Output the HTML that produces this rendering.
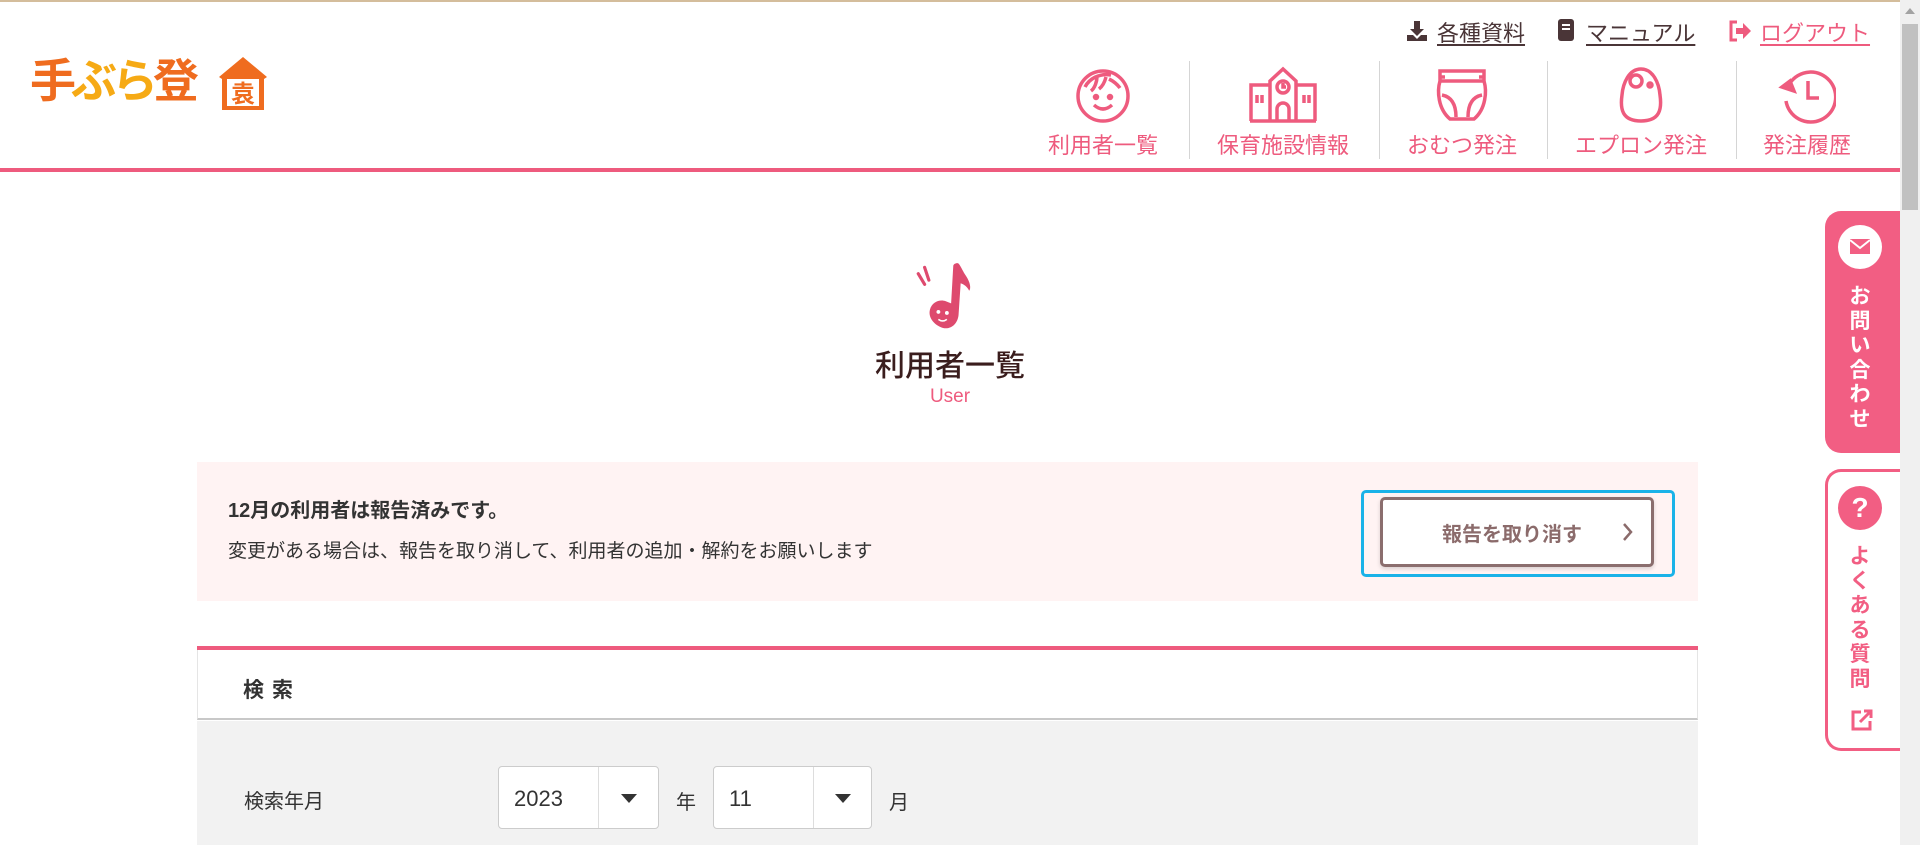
<!DOCTYPE html>
<html><head><meta charset="utf-8">
<style>
*{margin:0;padding:0;box-sizing:border-box}
body{width:1920px;height:845px;overflow:hidden;background:#fff;font-family:"Liberation Sans","Noto Sans CJK JP",sans-serif;position:relative;color:#333}
.a{position:absolute}
.tl{font-size:22px;text-decoration:underline;color:#4a3537;text-underline-offset:3px;white-space:nowrap}
.nav{position:absolute;top:66px;width:180px;text-align:center;color:#ee5b7e;font-size:22px;white-space:nowrap}
.nav svg{display:block;margin:0 auto 4px}
.div{position:absolute;top:61px;width:1px;height:98px;background:#d5d5d5}
.vt{font-weight:bold;font-size:21px;line-height:24.5px;text-align:center;width:26px}
.sel{position:absolute;top:766px;height:63px;background:#fff;border:1px solid #ccc;border-radius:4px}
.sel span{position:absolute;left:15px;top:19px;font-size:22px;color:#333}
.sel i{position:absolute;top:0;bottom:0;width:1px;background:#ddd}
</style></head><body>
<div class="a" style="left:0;top:0;width:1900px;height:2px;background:#d4bd9c"></div>

<!-- logo -->
<div class="a" style="left:30px;top:50px;height:62px;font-weight:bold;font-size:46px;line-height:62px;white-space:nowrap;letter-spacing:-5px">
<span style="color:#ef6c1f">手</span><span style="color:#f6aa15">ぶら</span><span style="color:#ef6c1f">登</span></div>
<svg class="a" style="left:216px;top:55px" width="54" height="56" viewBox="0 0 54 56"><path d="M3 22 L27 2 L51 22 L48 24 L48 55 L6 55 L6 24 Z" fill="#ef6c1f"/><rect x="11" y="24" width="32" height="27" fill="#fff"/><text x="27" y="47" font-size="24" font-weight="bold" fill="#ef6c1f" text-anchor="middle" font-family="Noto Sans CJK JP">袁</text></svg>

<!-- top links -->
<svg class="a" style="left:1406px;top:20px" width="22" height="22" viewBox="0 0 22 22"><path d="M8 1h6v8h4l-7 7-7-7h4z M1 15h6l4 4 4-4h6v6H1z" fill="#4a3537"/></svg>
<div class="a tl" style="left:1437px;top:16px">各種資料</div>
<svg class="a" style="left:1557px;top:18px" width="18" height="24" viewBox="0 0 18 24"><rect x="1" y="1" width="16" height="22" rx="3" fill="#4a3537"/><rect x="5" y="6" width="8" height="2" fill="#fff"/><rect x="5" y="10" width="8" height="2" fill="#fff"/></svg>
<div class="a tl" style="left:1586px;top:16px">マニュアル</div>
<svg class="a" style="left:1728px;top:20px" width="24" height="22" viewBox="0 0 24 22"><path d="M9 2H3v18h6" fill="none" stroke="#ee5b7e" stroke-width="3"/><path d="M8 8h7V3l8 8-8 8v-5H8z" fill="#ee5b7e"/></svg>
<div class="a tl" style="left:1760px;top:16px;color:#ee5b7e">ログアウト</div>

<!-- nav -->
<div class="nav" style="left:1013px"><svg width="56" height="58" viewBox="0 0 56 58" fill="none" stroke="#ee5b7e" stroke-width="3.5"><circle cx="28" cy="30" r="25"/><path d="M10 21c4-8 14-14 26-12M16 25c4-3 6-10 6-14M24 23c4-3 6-8 7-12M34 13c4 2 8 5 11 9"/><circle cx="21" cy="31" r="1.5" fill="#ee5b7e"/><circle cx="35" cy="31" r="1.5" fill="#ee5b7e"/><path d="M19 39q9 8 18 0"/></svg>利用者一覧</div>
<div class="div" style="left:1189px"></div>
<div class="nav" style="left:1193px"><svg width="70" height="58" viewBox="0 0 70 58" fill="none" stroke="#ee5b7e" stroke-width="3.5"><path d="M3 55V19h19M67 55V19H48M22 55V15L35 3l13 12v40M2 55h66"/><circle cx="35" cy="21" r="6"/><path d="M35 17v4h3M29 55V43a6 6 0 0112 0v12M9 29v8M14 29v8M56 29v8M61 29v8"/></svg>保育施設情報</div>
<div class="div" style="left:1379px"></div>
<div class="nav" style="left:1372px"><svg width="56" height="58" viewBox="0 0 56 58" fill="none" stroke="#ee5b7e" stroke-width="3.5"><path d="M6 5h44v10c3 10 2 28-10 38H16C4 43 3 25 6 15z M6 15h44 M5 11h6M45 11h6"/><path d="M8 29c10 2 14 10 14 22M48 29c-10 2-14 10-14 22"/></svg>おむつ発注</div>
<div class="div" style="left:1547px"></div>
<div class="nav" style="left:1551px"><svg width="50" height="58" viewBox="0 0 50 58" fill="none" stroke="#ee5b7e" stroke-width="3.5"><path d="M25 3c-12 0-18 14-19 26-2 14 0 26 19 26s21-12 19-26C43 17 37 3 25 3z"/><circle cx="20" cy="15" r="6"/><circle cx="34" cy="19" r="2"/></svg>エプロン発注</div>
<div class="div" style="left:1736px"></div>
<div class="nav" style="left:1717px"><svg width="58" height="58" viewBox="0 0 58 58" fill="none" stroke="#ee5b7e" stroke-width="3.5"><path d="M12 17A25 25 0 1 1 8 35"/><path d="M4 21l8-6 4 10z" fill="#ee5b7e"/><path d="M30 15v17h11"/></svg>発注履歴</div>
<div class="a" style="left:0;top:168px;width:1900px;height:4px;background:#ee5b7e"></div>

<!-- scrollbar -->
<div class="a" style="left:1900px;top:0;width:20px;height:845px;background:#f0f0f0"></div>
<div class="a" style="left:1905px;top:8px;width:0;height:0;border-left:5px solid transparent;border-right:5px solid transparent;border-bottom:6px solid #a3a3a3"></div>
<div class="a" style="left:1902px;top:24px;width:16px;height:186px;background:#c1c1c1"></div>

<!-- side tabs -->
<div class="a" style="left:1825px;top:211px;width:75px;height:242px;background:#f25e83;border-radius:16px 0 0 16px"></div>
<div class="a" style="left:1838px;top:225px;width:44px;height:44px;border-radius:50%;background:#fff"></div>
<svg class="a" style="left:1849px;top:238px" width="22" height="17" viewBox="0 0 22 17"><rect x="1" y="1" width="20" height="15" fill="#f25e83"/><path d="M1 2l10 8 10-8" stroke="#fff" stroke-width="2" fill="none"/></svg>
<div class="a vt" style="left:1847px;top:285px;color:#fff">お<br>問<br>い<br>合<br>わ<br>せ</div>
<div class="a" style="left:1825px;top:469px;width:75px;height:282px;background:#fff;border:3px solid #f25e83;border-right:none;border-radius:16px 0 0 16px"></div>
<div class="a" style="left:1838px;top:486px;width:44px;height:44px;border-radius:50%;background:#f25e83;color:#fff;font-weight:bold;font-size:28px;line-height:44px;text-align:center">?</div>
<div class="a vt" style="left:1847px;top:545px;color:#f25e83">よ<br>く<br>あ<br>る<br>質<br>問</div>
<svg class="a" style="left:1850px;top:708px" width="24" height="24" viewBox="0 0 24 24" fill="none" stroke="#f25e83" stroke-width="3"><path d="M11 4H3v17h17v-8"/><path d="M10 14L21 3M14 3h7v7"/></svg>

<!-- title -->
<svg class="a" style="left:914px;top:261px" width="70" height="70" viewBox="0 0 64 66"><path d="M40 2c2 0 4 6 8 12s5 12 3 14c-2-4-5-6-8-7l-2 30c-1 9-8 14-15 12S12 54 14 46s10-10 15-8l5 2 2-35c0-2 2-3 4-3z" fill="#de4a6e"/><path d="M3 12l6 10M9 6l4 12" stroke="#de4a6e" stroke-width="3" stroke-linecap="round"/><circle cx="22" cy="48" r="1.8" fill="#fff"/><circle cx="30" cy="49" r="1.8" fill="#fff"/><path d="M22 55q4 3 8 0" stroke="#fff" stroke-width="1.5" fill="none"/></svg>
<div class="a" style="left:760px;top:341px;width:380px;text-align:center;font-size:30px;color:#3a1d1d;font-weight:500">利用者一覧</div>
<div class="a" style="left:760px;top:386px;width:380px;text-align:center;font-size:19px;color:#ee5b7e">User</div>

<!-- banner -->
<div class="a" style="left:197px;top:462px;width:1501px;height:139px;background:#fff3f3"></div>
<div class="a" style="left:228px;top:494px;font-size:20px;font-weight:bold;color:#333">12月の利用者は報告済みです。</div>
<div class="a" style="left:228px;top:536px;font-size:19px;color:#333">変更がある場合は、報告を取り消して、利用者の追加・解約をお願いします</div>
<div class="a" style="left:1361px;top:490px;width:314px;height:87px;border:3px solid #1ab2e8;border-radius:5px"></div>
<div class="a" style="left:1380px;top:497px;width:274px;height:70px;border:3px solid #8b6e6e;border-radius:5px;background:#fff;box-shadow:0 2px 4px rgba(0,0,0,.15)"></div>
<div class="a" style="left:1442px;top:518px;font-size:20px;font-weight:bold;color:#8b6b6b">報告を取り消す</div>
<svg class="a" style="left:1622px;top:522px" width="12" height="20" viewBox="0 0 12 20"><path d="M2 2l7 8-7 8" stroke="#8b6b6b" stroke-width="2.5" fill="none"/></svg>

<!-- search card -->
<div class="a" style="left:197px;top:646px;width:1501px;height:4px;background:#ee5b7e"></div>
<div class="a" style="left:197px;top:650px;width:1501px;height:70px;background:#fff;border-left:1px solid #e5e5e5;border-right:1px solid #e5e5e5;border-bottom:2px solid #c8c8c8"></div>
<div class="a" style="left:243px;top:674px;font-size:21px;font-weight:bold;color:#333;letter-spacing:8px">検索</div>
<div class="a" style="left:197px;top:721px;width:1501px;height:124px;background:#f2f2f2"></div>
<div class="a" style="left:244px;top:785px;font-size:20px;color:#333">検索年月</div>
<div class="sel" style="left:498px;width:161px"><span>2023</span><i style="left:99px"></i></div>
<div class="a" style="left:621px;top:794px;border-left:8px solid transparent;border-right:8px solid transparent;border-top:9px solid #333"></div>
<div class="a" style="left:676px;top:786px;font-size:20px">年</div>
<div class="sel" style="left:713px;width:159px"><span>11</span><i style="left:99px"></i></div>
<div class="a" style="left:835px;top:794px;border-left:8px solid transparent;border-right:8px solid transparent;border-top:9px solid #333"></div>
<div class="a" style="left:889px;top:786px;font-size:20px">月</div>
</body></html>
